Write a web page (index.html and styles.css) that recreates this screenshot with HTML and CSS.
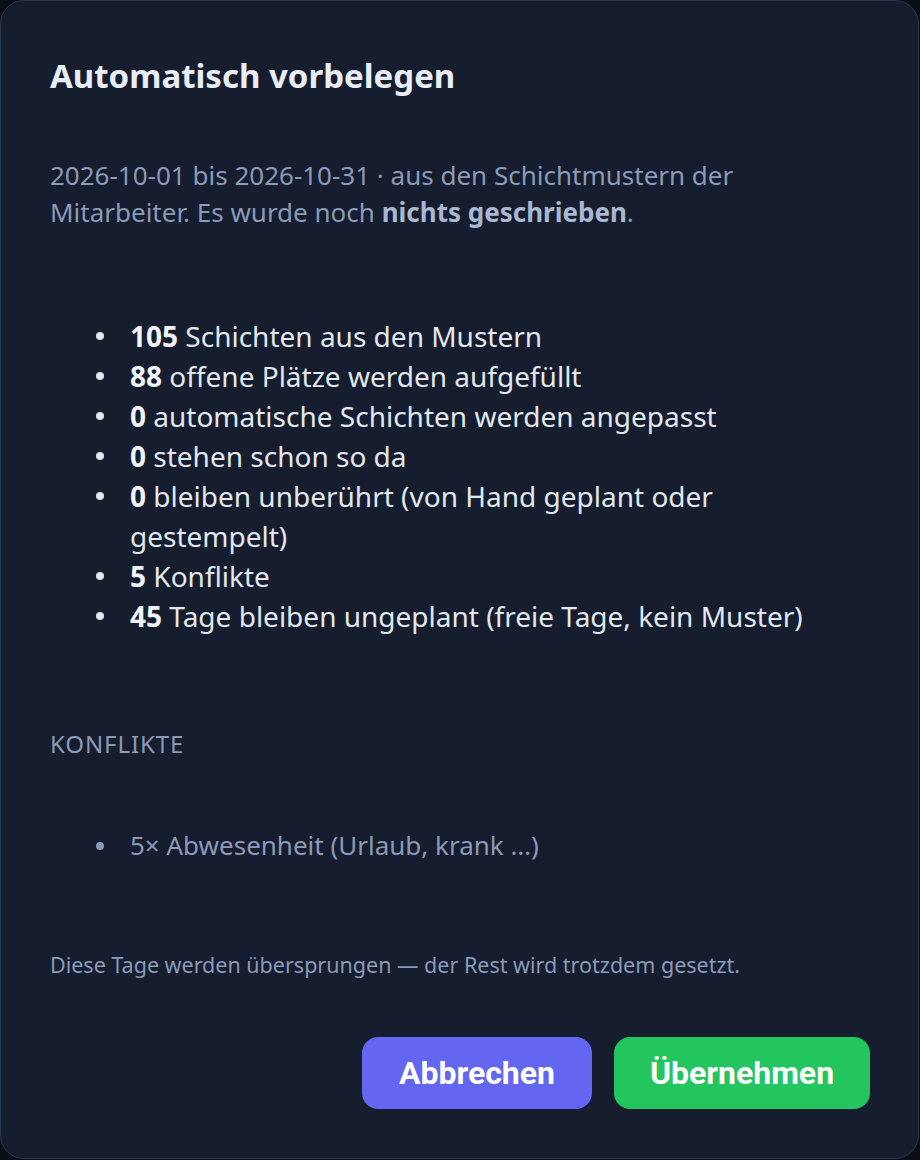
FILE: index.html
```html
<!DOCTYPE html>
<html lang="de">
<head>
<meta charset="utf-8">
<title>Automatisch vorbelegen</title>
<link rel="stylesheet" href="styles.css">
</head>
<body>
<div class="modal">
  <h2 class="title">Automatisch vorbelegen</h2>
  <p class="intro">2026-10-01 bis 2026-10-31 · aus den Schichtmustern der Mitarbeiter. Es wurde noch <b>nichts geschrieben</b>.</p>
  <ul class="stats">
    <li><b>105</b> Schichten aus den Mustern</li>
    <li><b>88</b> offene Plätze werden aufgefüllt</li>
    <li><b>0</b> automatische Schichten werden angepasst</li>
    <li><b>0</b> stehen schon so da</li>
    <li><b>0</b> bleiben unberührt (von Hand geplant oder gestempelt)</li>
    <li><b>5</b> Konflikte</li>
    <li><b>45</b> Tage bleiben ungeplant (freie Tage, kein Muster)</li>
  </ul>
  <div class="label">KONFLIKTE</div>
  <ul class="conflicts">
    <li>5× Abwesenheit (Urlaub, krank …)</li>
  </ul>
  <p class="note">Diese Tage werden übersprungen — der Rest wird trotzdem gesetzt.</p>
  <div class="actions">
    <button class="btn btn-cancel">Abbrechen</button>
    <button class="btn btn-apply">Übernehmen</button>
  </div>
</div>
</body>
</html>
```

FILE: styles.css
```css
html, body {
  margin: 0;
  padding: 0;
  background: #0a0e16;
}
body {
  font-family: "Noto Sans", "Open Sans", sans-serif;
  width: 920px;
  height: 1160px;
  overflow: hidden;
}
.modal {
  box-sizing: border-box;
  width: 919px;
  height: 1159px;
  background: #161d2e;
  border: 1px solid #2a3550;
  border-radius: 24px;
  padding: 55px 48px 48px 49px;
  display: flex;
  flex-direction: column;
}
.title {
  margin: 0;
  font-size: 33px;
  line-height: 40px;
  font-weight: 700;
  color: #e8edf7;
}
.intro {
  margin: 61px 0 0;
  max-width: 715px;
  font-size: 26px;
  line-height: 37px;
  color: #8b9ab5;
}
.intro b {
  color: #a9b7d0;
}
.stats,
.conflicts {
  list-style: none;
  padding-left: 80px;
}
.stats li,
.conflicts li {
  position: relative;
}
.stats li::before,
.conflicts li::before {
  content: "";
  position: absolute;
  border-radius: 50%;
  background: currentColor;
}
.stats {
  margin: 85px 0 0;
  font-size: 28px;
  line-height: 40px;
  color: #e2e8f0;
}
.stats li::before {
  left: -34px;
  top: 16px;
  width: 8px;
  height: 8px;
}
.stats b {
  color: #f1f5f9;
}
.label {
  margin-top: 92px;
  font-size: 24px;
  line-height: 32px;
  letter-spacing: 0.9px;
  color: #8b9ab5;
}
.conflicts {
  margin: 67px 0 0;
  font-size: 26px;
  line-height: 37px;
  color: #8b9ab5;
}
.conflicts li::before {
  left: -34px;
  top: 15px;
  width: 8px;
  height: 8px;
}
.note {
  margin: 86px 0 0;
  font-size: 21.5px;
  line-height: 30px;
  color: #8b9ab5;
}
.actions {
  margin-top: 57px;
  display: flex;
  justify-content: flex-end;
  gap: 22px;
}
.btn {
  height: 72px;
  border: none;
  border-radius: 16px;
  font-family: Roboto, "Liberation Sans", sans-serif;
  font-weight: 700;
  font-size: 32px;
  color: #ffffff;
  padding: 0;
}
.btn-cancel {
  background: #6366f1;
  width: 230px;
}
.btn-apply {
  background: #22c55e;
  width: 256px;
}
```
